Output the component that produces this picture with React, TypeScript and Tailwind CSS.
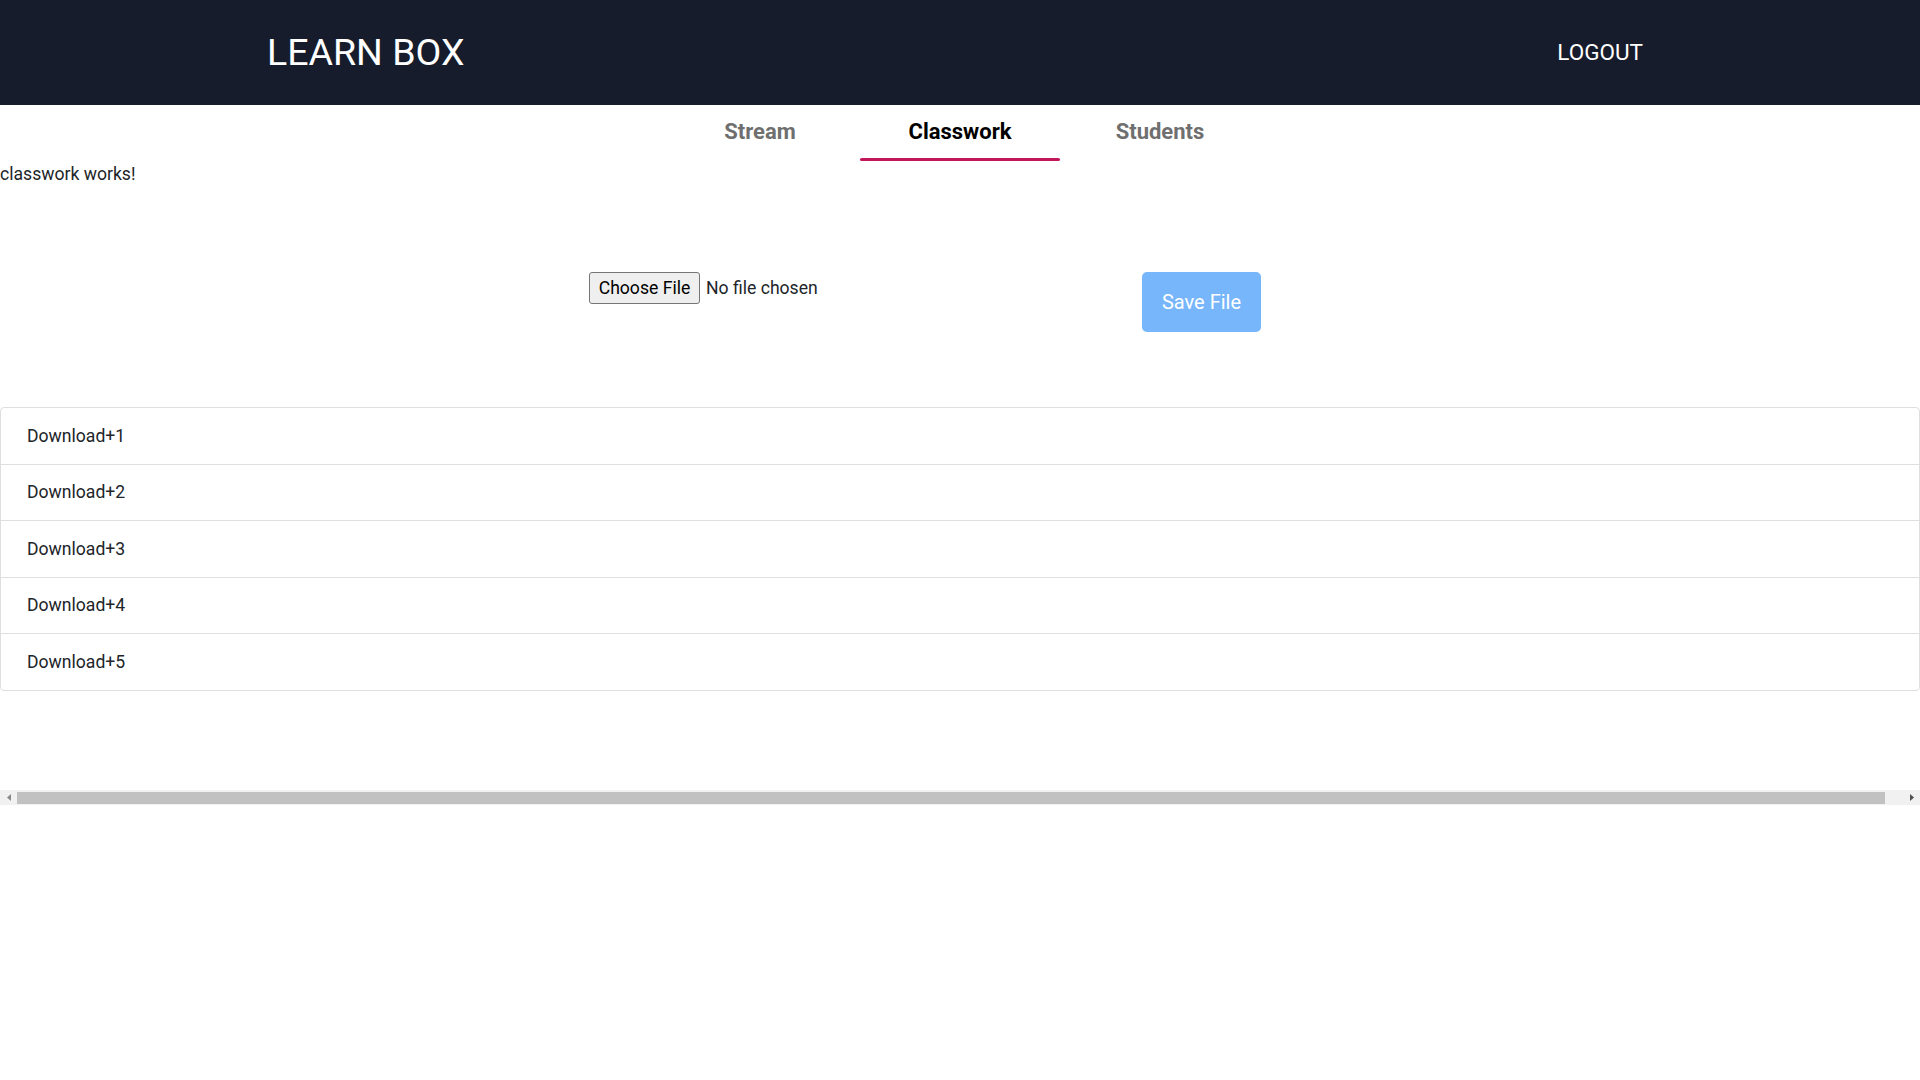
import React, { useState } from 'react';

const tabs = ['Stream', 'Classwork', 'Students'];
const downloads = [1, 2, 3, 4, 5];

const App: React.FC = () => {
  const [active, setActive] = useState('Classwork');

  return (
    <div className="min-h-screen bg-white text-[#212529]" style={{ fontFamily: 'Roboto, "Noto Sans", sans-serif' }}>
      <header className="h-[105px] bg-[#161c2b] flex items-center justify-between pl-[267px] pr-[277px] text-white">
        <h1 className="text-[37.5px] leading-none font-normal">LEARN BOX</h1>
        <button className="text-[22.5px] leading-none uppercase">Logout</button>
      </header>

      <nav className="flex justify-center">
        {tabs.map(tab => (
          <button
            key={tab}
            onClick={() => setActive(tab)}
            className={`relative w-[200px] h-[56px] pb-[4px] text-[22px] font-bold ${active === tab ? 'text-black' : 'text-[#6f6f6f]'}`}
          >
            {tab}
            {active === tab && <span className="absolute left-0 right-0 bottom-0 h-[3px] rounded-full bg-[#c2185b]" />}
          </button>
        ))}
      </nav>

      {/* tab body */}
      <div className="h-[629px] pt-[3px] overflow-hidden text-[17.6px]">
        <p className="leading-[20px]">classwork works!</p>

        <div className="flex items-start mt-[88px]">
          <div className="w-[553px] pl-[589px] box-content flex items-center gap-[6px] shrink-0">
            <span className="h-[32px] w-[111px] shrink-0 flex items-center justify-center border border-[#767676] bg-[#efefef] rounded-[3px] text-black">
              Choose File
            </span>
            <span className="whitespace-nowrap">No file chosen</span>
          </div>
          <button className="w-[119px] h-[60px] rounded-[5px] bg-[#77b6fb] text-white text-[20px]">Save File</button>
        </div>

        <ul className="mt-[75px] w-[1920px] border border-[#dfdfdf] rounded-[4px]">
          {downloads.map(n => (
            <li key={n} className="h-[56.5px] flex items-center pl-[26px] border-t border-[#dfdfdf] first:border-t-0 first:h-[55.5px]">
              Download+{n}
            </li>
          ))}
        </ul>
      </div>

      {/* horizontal scrollbar */}
      <div className="h-[15px] bg-[#f1f1f1] flex items-center">
        <div className="w-[17px] h-full flex items-center justify-center">
          <svg width="4" height="7" viewBox="0 0 4 7"><path d="M4 0L0 3.5L4 7Z" fill="#8a8a8a" /></svg>
        </div>
        <div className="flex-1 h-[12px] bg-[#c1c1c1]" />
        <div className="w-[35px] h-full flex items-center justify-end pr-[6px]">
          <svg width="4" height="7" viewBox="0 0 4 7"><path d="M0 0L4 3.5L0 7Z" fill="#505050" /></svg>
        </div>
      </div>
    </div>
  );
};

export default App;
